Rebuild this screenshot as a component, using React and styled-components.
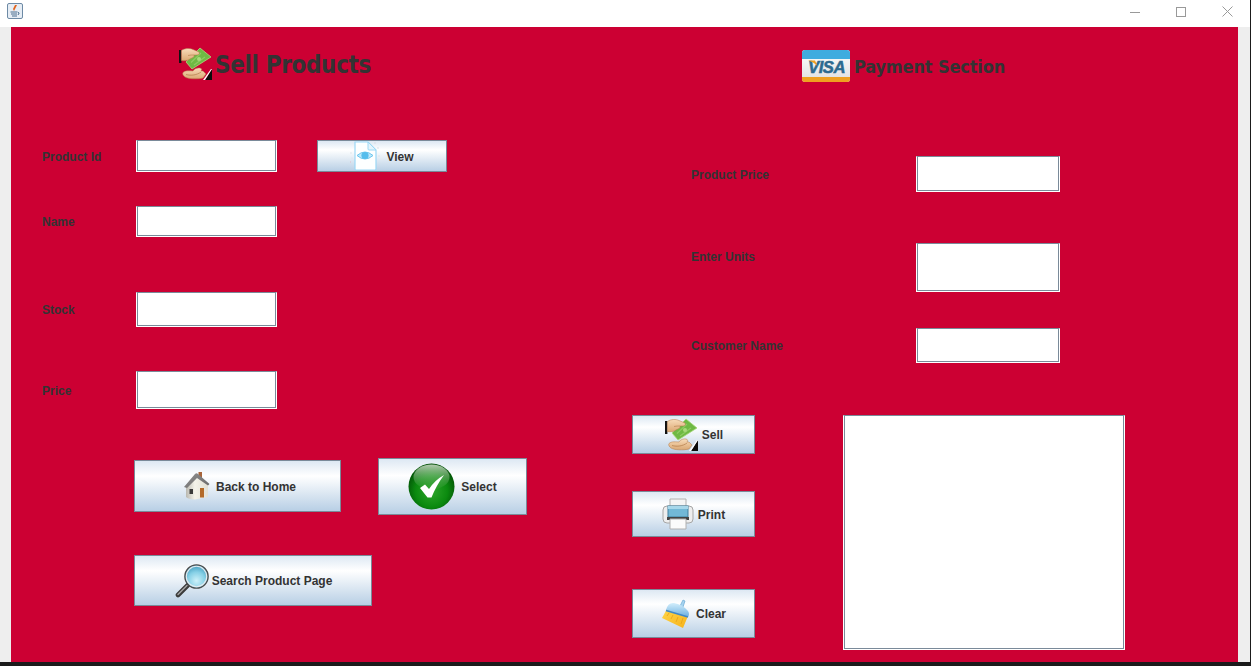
import React from "react";
import styled, { createGlobalStyle } from "styled-components";

const Global = createGlobalStyle`
  html, body { margin: 0; padding: 0; background: #1b1b1b; overflow: hidden; }
  * { box-sizing: border-box; }
`;

const Screen = styled.div`
  width: 1251px; height: 666px; padding: 0 1px 4px 0;
  background: #1b1b1b; display: flex;
`;
const Frame = styled.div`
  flex: 1; display: flex; flex-direction: column; background: #eeeeee;
`;
const TitleBar = styled.div`
  height: 27px; flex: none; background: #fff; display: flex; align-items: flex-start;
  justify-content: space-between; padding: 3px 0 0 7px;
`;
const WinControls = styled.div`
  display: flex; margin-top: -3px;
`;
const WinButton = styled.div`
  width: 46px; height: 23px; display: flex; align-items: center; justify-content: center;
`;
const Body = styled.div`
  flex: 1; padding: 0 12px 0 11px; display: flex; min-height: 0;
`;
const Panel = styled.div`
  flex: 1; background: #cc0033; display: grid; grid-template-columns: 621px 1fr; overflow: hidden;
`;
const LeftColumn = styled.section`
  padding: 20px 0 0 31px; display: flex; flex-direction: column; align-items: flex-start;
`;
const RightColumn = styled.section`
  padding: 23px 0 0 0; display: flex; flex-direction: column; align-items: flex-start;
`;
const TitleRow = styled.div`
  display: flex; align-items: center; gap: ${p => p.$gap}px; margin-left: ${p => p.$indent}px;
  height: ${p => p.$h}px;
`;
const Heading = styled.h1`
  margin: ${p => p.$drop}px 0 0; color: #333333; font-family: "DejaVu Sans", Verdana, sans-serif;
  font-stretch: condensed; font-weight: 700;
  font-size: ${p => p.$size}px; letter-spacing: ${p => p.$track}px; line-height: 1; white-space: nowrap;
`;
const FieldRow = styled.div`
  display: flex; align-items: ${p => p.$alignTop ? "flex-start" : "center"};
  margin-top: ${p => p.$top}px; margin-left: ${p => p.$indent || 0}px;
`;
const FieldLabel = styled.label`
  width: ${p => p.$w}px; flex: none; color: #333333; font: bold 12px "Liberation Sans", Arial, sans-serif;
  padding-top: ${p => p.$pad || 0}px;
`;
const TextInput = styled.input`
  display: block; flex: none; width: ${p => p.$w}px; height: ${p => p.$h}px; padding: 0; margin: 0;
  background: #fff; outline: none; border-radius: 0;
  border: 1px solid; border-color: #7a8a99 #ffffff #ffffff #ffffff;
  box-shadow: inset -1px -1px 0 #7a8a99, inset 1px 0 0 #7a8a99;
`;
const ReceiptArea = styled.textarea`
  display: block; flex: none; width: 282px; height: 235px; padding: 0; margin: 0 0 0 88px; resize: none;
  background: #fff; outline: none; border-radius: 0;
  border: 1px solid; border-color: #7a8a99 #ffffff #ffffff #ffffff;
  box-shadow: inset -1px -1px 0 #7a8a99, inset 1px 0 0 #7a8a99;
`;
const ActionButton = styled.button`
  flex: none; display: flex; align-items: center; justify-content: center; gap: ${p => p.$gap}px;
  width: ${p => p.$w}px; height: ${p => p.$h}px; margin: ${p => p.$top || 0}px 0 0 ${p => p.$left || 0}px; padding: 0;
  padding-left: ${p => p.$shift || 0}px;
  border: 1px solid #7a8a99; border-radius: 0; color: #333333;
  background: linear-gradient(180deg, #dde8f3 0%, #ffffff 30%, #b8cfe5 100%);
  font: bold 12px "Liberation Sans", Arial, sans-serif; white-space: nowrap;
  svg { display: block; flex: none; }
`;
const ButtonText = styled.span`
  margin-top: ${p => p.$drop || 0}px;
`;
const ButtonCluster = styled.div`
  display: flex; align-items: flex-start; margin: 49px 0 0 92px;
`;
const BottomRow = styled.div`
  display: flex; align-items: flex-start; margin-top: 52px;
`;
const ButtonStack = styled.div`
  display: flex; flex-direction: column; width: 123px;
`;

const Money = () => (
  <svg width="33" height="33" viewBox="0 0 33 33">
    <defs>
      <linearGradient id="skin" x1="0" y1="0" x2="0" y2="1">
        <stop offset="0" stopColor="#f8dcba" /><stop offset="1" stopColor="#dba873" />
      </linearGradient>
    </defs>
    <rect x="0" y="3" width="2.4" height="13" fill="#111" />
    <path d="M21 1 L32 10 L13 22 L7 15 Z" fill="#6fb944" stroke="#a9d97c" strokeWidth=".8" />
    <path d="M12 15.5 L22 6 M15 18 L26 10" stroke="#8ecb62" strokeWidth="1.1" />
    <circle cx="20" cy="12" r="2" fill="#a9d97c" />
    <path d="M2.4 3.5 C6 1 11 1 14 2.5 L20 5 C21 6.5 20 8 18 8 L15 8 C16 10 13 11 11 12 C8 14 5 14 2.4 13.5 Z" fill="url(#skin)" stroke="#b27b48" strokeWidth=".5" />
    <path d="M9 8.5 C11 8 13 8 15 8" stroke="#b27b48" strokeWidth=".6" fill="none" />
    <path d="M4 25.5 C7 23 11 24 14 24 C15 21.5 19 20.5 21 21 C23 21.5 23 23 22 24 L24 24 L27 27 L24 31 C18 32.5 9 32 6 30 C4.5 29 3 27 4 25.5 Z" fill="url(#skin)" stroke="#b27b48" strokeWidth=".5" />
    <path d="M7 27.5 C12 29 18 28 22 25" stroke="#b27b48" strokeWidth=".7" fill="none" />
    <path d="M26 33 L33 33 L33 22 Z" fill="#0c0c0c" />
    <path d="M24 33 L32 22 L33 22 L26 33 Z" fill="#fff" />
  </svg>
);

const VisaCard = () => (
  <svg width="48" height="32" viewBox="0 0 48 32">
    <defs>
      <linearGradient id="cardMid" x1="0" y1="0" x2="0" y2="1">
        <stop offset="0" stopColor="#ffffff" /><stop offset="1" stopColor="#dedede" />
      </linearGradient>
    </defs>
    <rect width="48" height="32" rx="3" fill="url(#cardMid)" />
    <path d="M0 9 V3 A3 3 0 0 1 3 0 H45 A3 3 0 0 1 48 3 V9 Z" fill="#3facdf" />
    <path d="M0 27 H48 V29 A3 3 0 0 1 45 32 H3 A3 3 0 0 1 0 29 Z" fill="#efa020" />
    <text x="6" y="22.5" fontFamily="Liberation Sans, Arial, sans-serif" fontWeight="700" fontStyle="italic" fontSize="16.7" letterSpacing="-0.5" fill="#2d6a8f" stroke="#2d6a8f" strokeWidth=".5">VISA</text>
    <path d="M6 10.5 H13 L15.5 16 Q12 12 6 10.5 Z" fill="#efa020" />
  </svg>
);

const EyeDoc = () => (
  <svg width="30" height="32" viewBox="0 0 30 32">
    <path d="M5 2 H18 L26 10 V29 Q26 30 25 30 H6 Q5 30 5 29 Z" fill="#fdffff" stroke="#9bd8f5" strokeWidth="1.2" />
    <path d="M18 2 L26 10 H19 Q18 10 18 9 Z" fill="#e3f5fd" stroke="#9bd8f5" strokeWidth="1" />
    <path d="M7 15.5 Q15 8.5 23 15.5 Q15 22.5 7 15.5 Z" fill="#bfe9fb" stroke="#6cc6ee" strokeWidth="1" />
    <circle cx="15" cy="15.5" r="3.6" fill="#55bdec" />
    <circle cx="1" cy="13" r=".7" fill="#d9dfe6" /><circle cx="0" cy="22" r=".8" fill="#e2b9c4" />
    <circle cx="2" cy="18" r=".6" fill="#d9dfe6" /><circle cx="28" cy="8" r=".7" fill="#cfd6de" />
    <circle cx="29" cy="16" r=".7" fill="#d9dfe6" /><circle cx="25" cy="3" r=".7" fill="#cfd6de" />
  </svg>
);

const House = () => (
  <svg width="26" height="30" viewBox="0 0 26 30">
    <defs>
      <linearGradient id="wall" x1="0" y1="0" x2="1" y2="0">
        <stop offset="0" stopColor="#b9b8b0" /><stop offset=".4" stopColor="#f4f3ea" /><stop offset="1" stopColor="#e2e0d4" />
      </linearGradient>
      <linearGradient id="roof" x1="0" y1="0" x2="1" y2="1">
        <stop offset="0" stopColor="#8f8f8f" /><stop offset="1" stopColor="#6a6a6a" />
      </linearGradient>
    </defs>
    <rect x="14.5" y="1" width="3.5" height="6" fill="#a8653a" />
    <path d="M2 15 L13 6 L24 13 V26 L11 28.5 Q4 28 2 26 Z" fill="url(#wall)" />
    <path d="M0 16 L11 3 Q12.5 1.5 14 3 L25.5 13 L24 14.5 L13 7 L3 17 Z" fill="url(#roof)" />
    <rect x="16" y="17" width="4" height="9.5" fill="#b46a28" />
    <rect x="5.5" y="18" width="3.5" height="5" fill="#3a3a3a" />
  </svg>
);

const CheckOrb = () => (
  <svg width="47" height="47" viewBox="0 0 47 47">
    <defs>
      <radialGradient id="orb" cx="50%" cy="60%" r="58%">
        <stop offset="0" stopColor="#2ea52a" /><stop offset=".6" stopColor="#0b8a0f" /><stop offset="1" stopColor="#025006" />
      </radialGradient>
      <linearGradient id="gloss" x1="0" y1="0" x2="0" y2="1">
        <stop offset="0" stopColor="#dfe9da" stopOpacity=".8" /><stop offset="1" stopColor="#5fae5c" stopOpacity=".1" />
      </linearGradient>
    </defs>
    <circle cx="23.5" cy="23.5" r="23" fill="url(#orb)" />
    <ellipse cx="23.5" cy="14" rx="18" ry="12.5" fill="url(#gloss)" />
    <path d="M12 25 L17 21.5 L21 26 Q27 17 36 12 Q28 23 23.5 34.5 L19.5 34.5 Z" fill="#fff" />
  </svg>
);

const Magnifier = () => (
  <svg width="34" height="34" viewBox="0 0 34 34">
    <defs>
      <radialGradient id="lens" cx="50%" cy="68%" r="62%">
        <stop offset="0" stopColor="#cdf1f9" /><stop offset=".6" stopColor="#86d0e6" /><stop offset="1" stopColor="#4aa4c4" />
      </radialGradient>
    </defs>
    <path d="M3 31 L13 21" stroke="#3a3a3a" strokeWidth="4.6" strokeLinecap="round" />
    <path d="M3 30.5 L12 21.5" stroke="#a3a3a3" strokeWidth="1.4" strokeLinecap="round" />
    <circle cx="21.5" cy="12.5" r="11.6" fill="url(#lens)" stroke="#4c4c4c" strokeWidth="1.4" />
    <circle cx="21.5" cy="12.5" r="10.2" fill="none" stroke="#e4eaee" strokeWidth="1.1" />
  </svg>
);

const Printer = () => (
  <svg width="32" height="32" viewBox="0 0 32 32">
    <path d="M8 1 H24 V11 H8 Z" fill="#f4f4f4" stroke="#b0b0b0" />
    <rect x="1" y="8" width="30" height="17" rx="4" fill="#eeeeee" stroke="#a6a6a6" />
    <rect x="6" y="8" width="20" height="11" fill="#72b8d6" stroke="#3f7f9d" />
    <rect x="6" y="8" width="20" height="3" fill="#a6d7ea" />
    <rect x="5" y="19" width="22" height="3" fill="#444" />
    <path d="M8 21 H24 V31 H8 Z" fill="#fbfbfb" stroke="#b0b0b0" />
  </svg>
);

const Broom = () => (
  <svg width="30" height="30" viewBox="0 0 30 30">
    <defs>
      <linearGradient id="brush" x1="0" y1="0" x2="1" y2="1">
        <stop offset="0" stopColor="#ffd64a" /><stop offset="1" stopColor="#f6b21a" />
      </linearGradient>
      <linearGradient id="head" x1="0" y1="0" x2="0" y2="1">
        <stop offset="0" stopColor="#d4effc" /><stop offset="1" stopColor="#6aaee0" />
      </linearGradient>
    </defs>
    <path d="M19 7 L22 1 L24 2 L22 8 Z" fill="#a6d4f0" stroke="#6aa7d2" strokeWidth=".7" />
    <path d="M6 10 L1 19 L22 29 L27 17 Z" fill="url(#brush)" />
    <path d="M5 11 Q7 3 13 4 Q21 5 27 12 Q29 15 27 18 Z" fill="url(#head)" />
    <path d="M5 11.5 L27 18" stroke="#3f88c9" strokeWidth="1.8" />
    <path d="M6 17 L8 14 M10 20 L12 16 M15 23 L17 18 M20 25 L22 19" stroke="#e59f12" strokeWidth=".7" />
  </svg>
);

const JavaIcon = () => (
  <svg width="16" height="16" viewBox="0 0 16 16">
    <rect x=".5" y=".5" width="15" height="15" rx="1.5" fill="#e6edf5" stroke="#6d8aa5" />
    <path d="M8 2 L10 2 L8 6 L7 8 L6 6 Z" fill="#e2641f" />
    <path d="M3.5 9 H10 M4 11 H10 M5 13 H10" stroke="#4b6f8f" strokeWidth="1.1" />
    <path d="M10.5 9 Q13.5 9.5 11 12" stroke="#4b6f8f" fill="none" />
  </svg>
);

const Minimize = () => <svg width="10" height="10" viewBox="0 0 10 10"><path d="M0 5.5 H10" stroke="#999" /></svg>;
const Maximize = () => <svg width="10" height="10" viewBox="0 0 10 10"><rect x=".5" y=".5" width="9" height="9" fill="none" stroke="#999" /></svg>;
const Close = () => <svg width="11" height="11" viewBox="0 0 11 11"><path d="M.5 .5 L10.5 10.5 M10.5 .5 L.5 10.5" stroke="#999" /></svg>;

export default function App() {
  return (
    <Screen>
      <Global />
      <Frame>
        <TitleBar>
          <JavaIcon />
          <WinControls>
            <WinButton><Minimize /></WinButton>
            <WinButton><Maximize /></WinButton>
            <WinButton><Close /></WinButton>
          </WinControls>
        </TitleBar>
        <Body>
          <Panel>
            <LeftColumn>
              <TitleRow $gap={3} $indent={137} $h={33}>
                <Money />
                <Heading $size={24} $track={-0.35} $drop={2}>Sell Products</Heading>
              </TitleRow>
              <FieldRow $top={60}>
                <FieldLabel $w={94} $pad={2}>Product Id</FieldLabel>
                <TextInput $w={141} $h={32} />
                <ActionButton $w={130} $h={32} $left={40} $gap={6}><EyeDoc /><ButtonText $drop={2}>View</ButtonText></ActionButton>
              </FieldRow>
              <FieldRow $top={34}>
                <FieldLabel $w={94}>Name</FieldLabel>
                <TextInput $w={141} $h={31} />
              </FieldRow>
              <FieldRow $top={55}>
                <FieldLabel $w={94}>Stock</FieldLabel>
                <TextInput $w={141} $h={35} />
              </FieldRow>
              <FieldRow $top={44}>
                <FieldLabel $w={94} $pad={2}>Price</FieldLabel>
                <TextInput $w={141} $h={38} />
              </FieldRow>
              <ButtonCluster>
                <ActionButton $w={207} $h={52} $top={2} $gap={6} $shift={5}><House /><ButtonText $drop={2}>Back to Home</ButtonText></ActionButton>
                <ActionButton $w={149} $h={57} $left={37} $gap={6}><CheckOrb /><ButtonText>Select</ButtonText></ActionButton>
              </ButtonCluster>
              <ActionButton $w={238} $h={51} $top={40} $left={92} $gap={3} $shift={1}><Magnifier /><ButtonText>Search Product Page</ButtonText></ActionButton>
            </LeftColumn>
            <RightColumn>
              <TitleRow $gap={4} $indent={170} $h={32}>
                <VisaCard />
                <Heading $size={18} $track={-0.15} $drop={2}>Payment Section</Heading>
              </TitleRow>
              <FieldRow $top={74} $indent={59}>
                <FieldLabel $w={225} $pad={2}>Product Price</FieldLabel>
                <TextInput $w={144} $h={36} />
              </FieldRow>
              <FieldRow $top={51} $indent={59} $alignTop>
                <FieldLabel $w={225} $pad={7}>Enter Units</FieldLabel>
                <TextInput $w={144} $h={49} />
              </FieldRow>
              <FieldRow $top={36} $indent={59}>
                <FieldLabel $w={225}>Customer Name</FieldLabel>
                <TextInput $w={144} $h={35} />
              </FieldRow>
              <BottomRow>
                <ButtonStack>
                  <ActionButton $w={123} $h={39} $gap={4} $shift={1}><Money /><ButtonText>Sell</ButtonText></ActionButton>
                  <ActionButton $w={123} $h={46} $top={37} $gap={4}><Printer /><ButtonText $drop={2}>Print</ButtonText></ActionButton>
                  <ActionButton $w={123} $h={49} $top={52} $gap={5}><Broom /><ButtonText>Clear</ButtonText></ActionButton>
                </ButtonStack>
                <ReceiptArea />
              </BottomRow>
            </RightColumn>
          </Panel>
        </Body>
      </Frame>
    </Screen>
  );
}
